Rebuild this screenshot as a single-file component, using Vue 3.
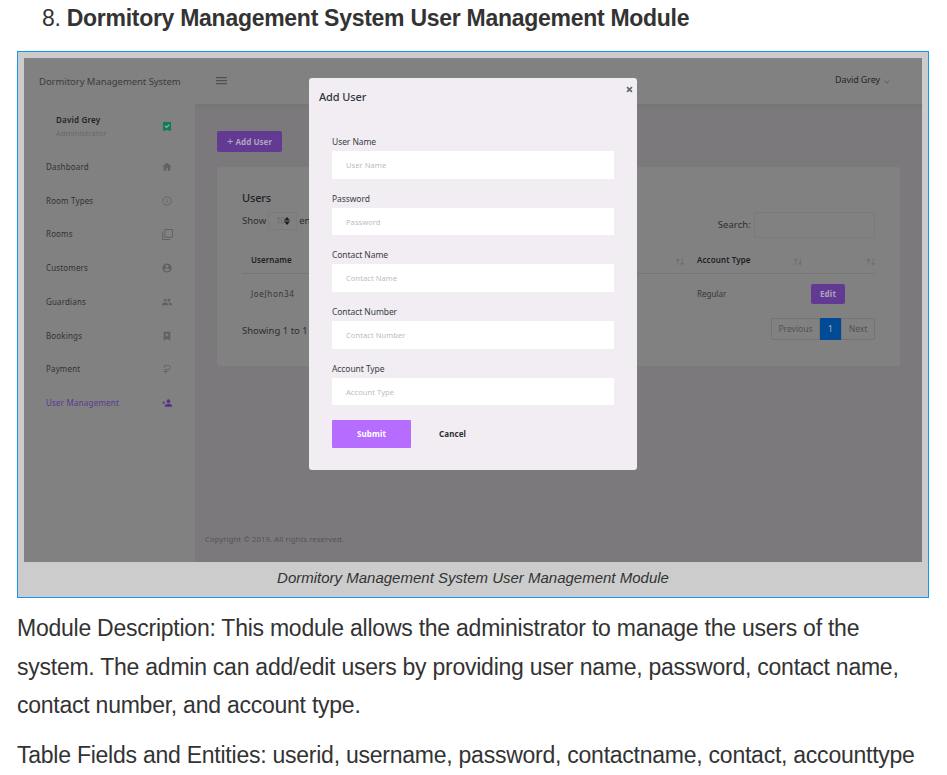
<script setup>
const menu = [
  { label: 'Dashboard', icon: 'M4 21V11H1L12 2l11 9h-3v10h-6v-7h-4v7z' },
  { label: 'Room Types', icon: 'M11 17h2v-6h-2zm0-8h2V7h-2zm1-8a11 11 0 1 0 0 22 11 11 0 0 0 0-22zm0 20a9 9 0 1 1 0-18 9 9 0 0 1 0 18z' },
  { label: 'Rooms', icon: 'M2 6H0v16a2 2 0 0 0 2 2h16v-2H2zM22 0H7a2 2 0 0 0-2 2v15a2 2 0 0 0 2 2h15a2 2 0 0 0 2-2V2a2 2 0 0 0-2-2zm0 17H7V2h15z', size: 'large' },
  { label: 'Customers', icon: 'M12 1a11 11 0 1 0 0 22 11 11 0 0 0 0-22zm0 4a3.5 3.5 0 1 1 0 7 3.5 3.5 0 0 1 0-7zm0 15a8 8 0 0 1-6.500-3.500c0-2.200 4.300-3.300 6.500-3.300s6.500 1.100 6.500 3.300A8 8 0 0 1 12 20z' },
  { label: 'Guardians', icon: 'M16.500 11a3.500 3.500 0 1 0 0-7 3.500 3.500 0 0 0 0 7zm-9 0a3.500 3.500 0 1 0 0-7 3.500 3.500 0 0 0 0 7zm0 2C5 13 0 14.300 0 17v3h15v-3c0-2.700-5-4-7.500-4zm9 0l-1.500.1c1.500 1 2.500 2.200 2.500 3.900v3H24v-3c0-2.700-5-4-7.500-4z' },
  { label: 'Bookings', icon: 'M4 2h16v21l-8-4-8 4zM12 5l-1.500 3H7l2.700 2.200L8.700 14l3.300-2 3.300 2-1-3.800L17 8h-3.500z' },
  { label: 'Payment', icon: 'M5 3h10.500a5.500 5.500 0 0 1 0 11H9v2.500h7v2H9V23H7v-4.500H4v-2h3V12h8.500a3.500 3.500 0 0 0 0-7H7v4H5z' },
  { label: 'User Management', icon: 'M15.500 12a4.500 4.500 0 1 0 0-9 4.500 4.500 0 0 0 0 9zM5.500 10.500V8h-2v2.500H1v2h2.500V15h2v-2.500H8v-2zm10 3C12 13.500 7 15.500 7 18v3h17v-3c0-2.500-5-4.500-8.500-4.500z', active: true },
]
const fields = ['User Name', 'Password', 'Contact Name', 'Contact Number', 'Account Type']
</script>

<template>
  <main class="article">
    <h2 class="heading"><span class="num">8.</span> Dormitory Management System User Management Module</h2>
    <figure class="figure">
      <div class="app">
        <aside class="sidebar">
          <div class="brand">Dormitory Management System</div>
          <div class="profile">
            <div>
              <div class="name">David Grey</div>
              <div class="role">Administrator</div>
            </div>
            <svg class="badge" viewBox="0 0 8 9"><path d="M0 0h8v9L4 8 0 9z" /><path class="tick" d="M1.800 3.700l1.700 1.700 2.800-2.800" /></svg>
          </div>
          <nav class="menu">
            <div v-for="m in menu" :key="m.label" class="item" :class="{ active: m.active }">
              <span>{{ m.label }}</span>
              <span class="icon-box"><svg :class="m.size" viewBox="0 0 24 24"><path fill-rule="evenodd" :d="m.icon" /></svg></span>
            </div>
          </nav>
        </aside>
        <section class="body">
          <header class="topbar">
            <div class="burger"><i></i><i></i><i></i></div>
            <div class="account">David Grey <svg viewBox="0 0 6 4"><path d="M.8.800L3 3 5.200.8" /></svg></div>
          </header>
          <div class="content">
            <div class="add"><b class="plus">+</b> Add User</div>
            <div class="card">
              <div class="title">Users</div>
              <div class="tools">
                <div class="show">
                  <span>Show</span>
                  <span class="select">10<svg viewBox="0 0 6 8"><path d="M0 3.400L3 0l3 3.400zM0 4.600h6L3 8z" /></svg></span>
                  <span>entries</span>
                </div>
                <div class="search"><span>Search:</span><span class="box"></span></div>
              </div>
              <div class="row head">
                <span>Username</span>
                <span class="sort">↑↓</span>
                <span class="type">Account Type</span>
                <span class="sort">↑↓</span>
                <span class="sort last">↑↓</span>
              </div>
              <div class="row data">
                <span class="user">JoeJhon34</span>
                <span></span>
                <span class="type">Regular</span>
                <span class="edit">Edit</span>
              </div>
              <div class="foot">
                <span class="info">Showing 1 to 1</span>
                <div class="pager"><span class="prev">Previous</span><span class="page">1</span><span class="next">Next</span></div>
              </div>
            </div>
            <div class="copyright">Copyright © 2019. All rights reserved.</div>
          </div>
        </section>
        <div class="modal">
          <div class="modal-head">
            <span class="modal-title">Add User</span>
            <svg class="close" viewBox="0 0 8 8"><path d="M1.200 1.200l5.600 5.600M6.800 1.200L1.200 6.800" /></svg>
          </div>
          <div class="form">
            <div v-for="f in fields" :key="f" class="field">
              <div class="label">{{ f }}</div>
              <div class="input">{{ f }}</div>
            </div>
            <div class="actions"><span class="submit">Submit</span><span class="cancel">Cancel</span></div>
          </div>
        </div>
      </div>
      <figcaption>Dormitory Management System User Management Module</figcaption>
    </figure>
    <p class="desc">Module Description: This module allows the administrator to manage the users of the system. The admin can add/edit users by providing user name, password, contact name, contact number, and account type.</p>
    <p class="entities">Table Fields and Entities: userid, username, password, contactname, contact, accounttype</p>
  </main>
</template>

<style>
body { margin: 0; background: #fff; overflow: hidden; }
</style>

<style scoped>
* { box-sizing: border-box; }
.article { width: 947px; height: 775px; overflow: hidden; padding: 0 18px 0 17px; font-family: "Liberation Sans", Arial, sans-serif; color: #333; }
.heading { margin: 0; height: 51px; padding-left: 25px; font-size: 23px; line-height: 37px; letter-spacing: -.28px; white-space: nowrap; }
.num { font-weight: 400; }
.figure { margin: 0; width: 912px; height: 547px; border: 1px solid #1597ee; background: #ccc; padding: 6px; }
figcaption { text-align: center; font-style: italic; font-size: 15px; line-height: 32px; white-space: nowrap; }
p { margin: 0; font-size: 23px; line-height: 38.500px; letter-spacing: -.245px; }
.desc { padding-top: 11px; height: 138px; }
.entities { white-space: nowrap; }

.app { position: relative; width: 898px; height: 504px; display: flex; background: #818181; color: #2b2e33; font-family: "Noto Sans", sans-serif; font-size: 8px; line-height: 12px; overflow: hidden; white-space: nowrap; }
.sidebar { width: 171px; }
.brand { height: 46px; line-height: 47px; padding-left: 15px; font-size: 9.500px; letter-spacing: -.05px; color: #3b3b3d; }
.profile { height: 46px; padding: 9px 24px 0 32px; display: flex; justify-content: space-between; }
.name { font-weight: 600; line-height: 14px; letter-spacing: .2px; color: #222428; }
.role { font-size: 7.500px; letter-spacing: .15px; color: #686769; }
.badge { width: 8px; height: 9px; margin-top: 9px; fill: #117a5c; }
.tick { fill: none; stroke: #93b8ab; stroke-width: 1.100; }
.item { height: 33.750px; padding: 0 21px 0 22px; display: flex; align-items: center; justify-content: space-between; letter-spacing: .15px; color: #303337; fill: #616064; }
.item.active { color: #603791; fill: #57308a; letter-spacing: .2px; }
.icon-box { width: 14px; height: 14px; display: flex; align-items: center; justify-content: center; }
.icon-box svg { width: 10px; height: 10px; }
.icon-box svg.large { width: 11px; height: 11px; }

.body { width: 727px; display: flex; flex-direction: column; }
.topbar { height: 46px; padding: 0 32px 0 21px; display: flex; align-items: center; justify-content: space-between; }
.burger { width: 11px; height: 8px; margin-top: -1px; display: flex; flex-direction: column; gap: 2px; }
.burger i { height: 1px; background: #505052; box-shadow: 0 .5px 0 #6a6a6b; }
.account { display: flex; align-items: center; gap: 4px; font-size: 9px; letter-spacing: -.1px; color: #252629; padding-bottom: 2px; }
.account svg { width: 6px; height: 4px; fill: none; stroke: #555; stroke-width: .9; margin-top: 3px; }
.content { flex: 1; background: linear-gradient(#777478, #7c797c 5px); padding: 27px 22px 0; display: flex; flex-direction: column; }
.add { width: 65px; height: 21px; background: #623a94; border-radius: 2px; color: #b0a4bd; font-weight: 700; line-height: 22px; text-align: center; letter-spacing: .05px; }
.plus { font-size: 11px; font-weight: 400; line-height: 10px; }
.card { margin-top: 15px; width: 683px; height: 199px; border-radius: 3px; background: #818181; padding: 23px 25px 0; }
.title { font-size: 11px; font-weight: 500; line-height: 16px; letter-spacing: -.15px; color: #202226; }
.tools { height: 40px; display: flex; justify-content: space-between; font-size: 9.500px; }
.show { display: flex; gap: 2px; padding-top: 6px; height: 24px; line-height: 18px; }
.select { width: 29px; height: 18px; border: 1px solid #7b7b7c; padding-left: 7px; display: flex; align-items: center; color: #6b6b6d; font-size: 8px; letter-spacing: -.5px; }
.select svg { width: 6px; height: 8px; fill: #1d1e20; }
.search { display: flex; gap: 3px; padding-top: 6px; line-height: 25px; letter-spacing: .1px; }
.box { width: 121px; height: 26px; border: 1px solid #7a7a7b; border-radius: 2px; }
.row { display: grid; grid-template-columns: 423px 32px 86px 73px 18px; }
.row > span:first-child { padding-left: 9px; }
.head { height: 28px; line-height: 28px; font-weight: 600; letter-spacing: .05px; color: #202226; border-bottom: 1px solid #757576; }
.head .type { letter-spacing: .1px; }
.sort { padding-left: 9px; font-family: "DejaVu Sans", sans-serif; font-size: 9px; line-height: 32px; letter-spacing: -3px; font-weight: 400; color: #6c6c6e; }
.sort.last { padding-left: 9px; }
.data { height: 44px; padding-top: 10px; line-height: 20px; color: #35373b; }
.data .user { letter-spacing: .65px; }
.edit { width: 34px; height: 20px; margin-left: 28px; border-radius: 2px; background: #623a94; color: #b0a4bd; font-weight: 700; line-height: 20px; text-align: center; letter-spacing: .2px; }
.foot { display: flex; justify-content: space-between; }
.info { font-size: 9.500px; line-height: 26px; }
.pager { display: flex; height: 22px; line-height: 20px; text-align: center; color: #505256; font-size: 8.500px; }
.pager span { border: 1px solid #747475; }
.prev { width: 49px; border-radius: 2px 0 0 2px; }
.pager .page { width: 21px; background: #004a96; border-color: #004a96; color: #a9b6c5; }
.next { width: 34px; border-radius: 0 2px 2px 0; }
.copyright { margin: 167px 0 0 -12px; font-size: 7.500px; letter-spacing: .19px; color: #535155; }

.modal { position: absolute; left: 285px; top: 20px; width: 328px; height: 392px; border-radius: 3px; background: #f1edf3; }
.modal-head { height: 58px; padding: 8px 4px 0 10px; display: flex; justify-content: space-between; }
.modal-title { font-size: 11px; line-height: 22px; font-weight: 500; letter-spacing: -.1px; color: #33363c; }
.close { width: 7px; height: 7px; stroke: #69676d; stroke-width: 1.900; }
.form { padding: 0 23px; }
.field { height: 56.700px; }
.label { height: 15px; line-height: 11px; font-size: 8.500px; letter-spacing: -.08px; color: #3a3d43; }
.input { height: 27.500px; border-radius: 1px; background: #fff; padding-left: 14px; line-height: 28px; font-size: 7.500px; color: #bcbcbf; letter-spacing: .08px; }
.actions { display: flex; gap: 28px; padding-top: .5px; line-height: 28px; font-weight: 700; }
.submit { width: 79px; height: 28px; border-radius: 1px; background: #b66dff; color: #fff; text-align: center; letter-spacing: .1px; }
.cancel { color: #2e3036; letter-spacing: .1px; }
</style>
